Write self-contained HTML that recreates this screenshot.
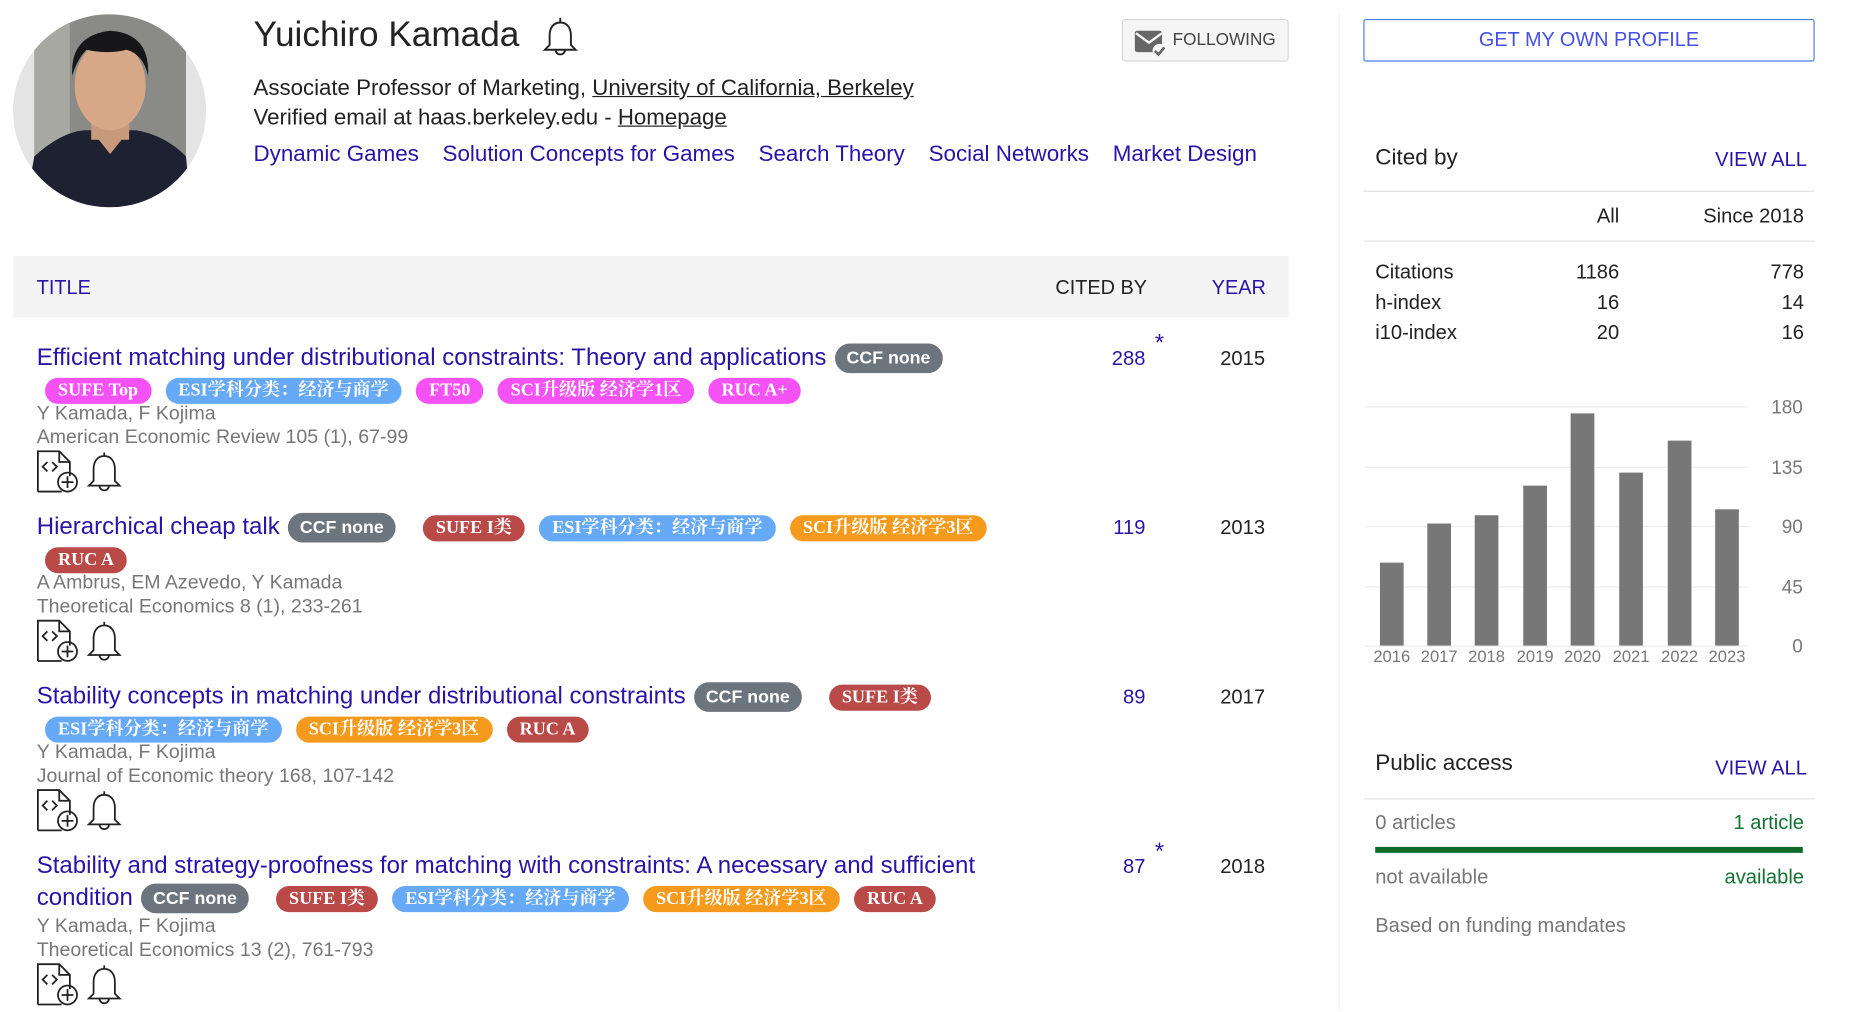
<!DOCTYPE html>
<html><head><meta charset="utf-8">
<style>
html,body{margin:0;padding:0;background:#fff;overflow:hidden;width:1855px;height:1010px}
#w{position:absolute;left:0;top:0;width:1570px;height:852px;transform:scale(1.1845);transform-origin:0 0;font-family:"Liberation Sans","Noto Sans CJK SC",sans-serif;color:#222}
.a{position:absolute;white-space:nowrap}
.lnk{color:#2a13a8}
.g{color:#777}
.tag{display:inline-block;font-family:"Liberation Serif","Noto Serif CJK SC",serif;font-weight:bold;color:#fff;font-size:15.3px;line-height:22px;height:22px;padding:0 11px;border-radius:11px;margin:-5px 5px -5px 7px;vertical-align:1px}
.ccf{font-family:"Liberation Sans",sans-serif;background:#6c757d;height:25px;line-height:25px;border-radius:13px;font-size:15px;padding:0 10px;vertical-align:1px;margin-top:-7px;margin-bottom:-2px}
.mag{background:#f552f5}.blu{background:#66a9f7}.red{background:#b94a48}.org{background:#f59a1c}
.pub{position:absolute;left:31px;width:860px}
.t{font-size:20.3px;line-height:26.5px;color:#2a13a8}
.au{font-size:16.5px;line-height:20px;color:#777;margin-top:-3px}
.ic{height:36px;margin-top:1px}
.num{position:absolute;font-size:17px;color:#2a13a8;text-align:right;width:60px}
.yr{position:absolute;font-size:17px;color:#222;text-align:right;width:60px}
.r{font-size:17px}
</style></head><body><div id="w">
<svg class="a" style="left:11px;top:12px" width="163" height="163" viewBox="0 0 163 163">
<defs><clipPath id="c"><circle cx="81.5" cy="81.5" r="81.5"/></clipPath></defs>
<g clip-path="url(#c)">
<rect width="163" height="163" fill="#e4e4e4"/>
<rect x="18" y="0" width="128" height="163" fill="#8a8a86"/>
<rect x="18" y="0" width="30" height="163" fill="#a7a8a2"/>
<path d="M10 163 L18 120 Q40 100 60 98 L104 98 Q128 102 146 120 L150 163Z" fill="#1e2230"/>
<rect x="66" y="78" width="32" height="28" fill="#c89a7c"/>
<ellipse cx="82" cy="60" rx="30" ry="38" fill="#d7a887"/>
<path d="M50 52 Q48 18 82 14 Q116 16 114 52 Q110 34 96 30 Q80 34 62 30 Q54 38 50 52Z" fill="#17171a"/>
<path d="M66 98 L82 118 L98 98 Z" fill="#c89a7c"/>
</g></svg>
<div class="a" style="left:214px;top:13px;font-size:29.7px;color:#222">Yuichiro Kamada</div>
<svg class="a" style="left:457px;top:13px" width="32" height="36" viewBox="0 0 32 36" fill="none" stroke="#222" stroke-width="1.6"><path d="M16 2v4M16 6c-6 0-9 5-9 11v8l-4 4h26l-4-4v-8c0-6-3-11-9-11zM12 29a4 4 0 0 0 8 0"/></svg>
<div class="a" style="left:947px;top:16px;width:139px;height:34px;border:1px solid #d8d8d8;border-radius:3px;background:#f5f5f5"></div>
<svg class="a" style="left:958px;top:25px" width="28" height="24" viewBox="0 0 28 24"><rect x="0" y="1" width="23" height="18" rx="2" fill="#666"/><path d="M1 3l11 8 11-8" stroke="#f5f5f5" stroke-width="2" fill="none"/><circle cx="21" cy="18" r="6" fill="#f5f5f5"/><path d="M17 18l3 3 5-6" stroke="#666" stroke-width="2.2" fill="none"/></svg>
<div class="a" style="left:990px;top:26px;font-size:14.5px;color:#444">FOLLOWING</div>
<div class="a" style="left:214px;top:63px;font-size:18.8px">Associate Professor of Marketing, <u>University of California, Berkeley</u></div>
<div class="a" style="left:214px;top:88px;font-size:18.8px">Verified email at haas.berkeley.edu - <u>Homepage</u></div>
<div class="a lnk" style="left:214px;top:120px;font-size:18.9px">Dynamic Games<span style="margin-left:20px">Solution Concepts for Games</span><span style="margin-left:20px">Search Theory</span><span style="margin-left:20px">Social Networks</span><span style="margin-left:20px">Market Design</span></div>
<div class="a" style="left:11px;top:216px;width:1077px;height:52px;background:#f4f4f4"></div>
<div class="a lnk" style="left:31px;top:233px;font-size:16.8px">TITLE</div>
<div class="a" style="left:891px;top:233px;font-size:16.8px">CITED BY</div>
<div class="a lnk" style="left:1023px;top:233px;font-size:16.8px">YEAR</div>

<div class="pub" style="top:289px"><div class="t">Efficient matching under distributional constraints: Theory and applications<span class="tag ccf">CCF none</span><span class="tag mag">SUFE Top</span><span class="tag blu">ESI学科分类：经济与商学</span><span class="tag mag">FT50</span><span class="tag mag">SCI升级版 经济学1区</span><span class="tag mag">RUC A+</span></div>
<div class="au">Y Kamada, F Kojima<br>American Economic Review 105 (1), 67-99</div>
<svg class="ic" width="80" height="36" viewBox="0 0 80 36" fill="none" stroke="#222" stroke-width="1.5"><path d="M1 35V1h18l9 9v12M1 35h20"/><path d="M19 1v9h9"/><path d="M9 10l-4 4 4 4M13 10l4 4-4 4"/><circle cx="26" cy="27" r="8"/><path d="M26 22v10M21 27h10"/><path d="M57 2v3M57 5c-6 0-9 5-9 11v10l-4 4h26l-4-4V16c0-6-3-11-9-11zM53 30a4 4 0 0 0 8 0"/></svg></div>
<div class="num" style="left:907px;top:293px">288</div><div class="a lnk" style="left:975px;top:279px;font-size:20px">*</div>
<div class="yr" style="left:1008px;top:293px">2015</div>

<div class="pub" style="top:432px"><div class="t">Hierarchical cheap talk<span class="tag ccf">CCF none</span><span class="tag red" style="margin-left:18px">SUFE I类</span><span class="tag blu">ESI学科分类：经济与商学</span><span class="tag org">SCI升级版 经济学3区</span><span class="tag red">RUC A</span></div>
<div class="au">A Ambrus, EM Azevedo, Y Kamada<br>Theoretical Economics 8 (1), 233-261</div>
<svg class="ic" width="80" height="36" viewBox="0 0 80 36" fill="none" stroke="#222" stroke-width="1.5"><path d="M1 35V1h18l9 9v12M1 35h20"/><path d="M19 1v9h9"/><path d="M9 10l-4 4 4 4M13 10l4 4-4 4"/><circle cx="26" cy="27" r="8"/><path d="M26 22v10M21 27h10"/><path d="M57 2v3M57 5c-6 0-9 5-9 11v10l-4 4h26l-4-4V16c0-6-3-11-9-11zM53 30a4 4 0 0 0 8 0"/></svg></div>
<div class="num" style="left:907px;top:436px">119</div>
<div class="yr" style="left:1008px;top:436px">2013</div>

<div class="pub" style="top:575px"><div class="t">Stability concepts in matching under distributional constraints<span class="tag ccf">CCF none</span><span class="tag red" style="margin-left:18px">SUFE I类</span><span class="tag blu">ESI学科分类：经济与商学</span><span class="tag org">SCI升级版 经济学3区</span><span class="tag red">RUC A</span></div>
<div class="au">Y Kamada, F Kojima<br>Journal of Economic theory 168, 107-142</div>
<svg class="ic" width="80" height="36" viewBox="0 0 80 36" fill="none" stroke="#222" stroke-width="1.5"><path d="M1 35V1h18l9 9v12M1 35h20"/><path d="M19 1v9h9"/><path d="M9 10l-4 4 4 4M13 10l4 4-4 4"/><circle cx="26" cy="27" r="8"/><path d="M26 22v10M21 27h10"/><path d="M57 2v3M57 5c-6 0-9 5-9 11v10l-4 4h26l-4-4V16c0-6-3-11-9-11zM53 30a4 4 0 0 0 8 0"/></svg></div>
<div class="num" style="left:907px;top:579px">89</div>
<div class="yr" style="left:1008px;top:579px">2017</div>

<div class="pub" style="top:718px"><div class="t">Stability and strategy-proofness for matching with constraints: A necessary and sufficient condition<span class="tag ccf">CCF none</span><span class="tag red" style="margin-left:18px">SUFE I类</span><span class="tag blu">ESI学科分类：经济与商学</span><span class="tag org">SCI升级版 经济学3区</span><span class="tag red">RUC A</span></div>
<div class="au" style="margin-top:1px">Y Kamada, F Kojima<br>Theoretical Economics 13 (2), 761-793</div>
<svg class="ic" width="80" height="36" viewBox="0 0 80 36" fill="none" stroke="#222" stroke-width="1.5"><path d="M1 35V1h18l9 9v12M1 35h20"/><path d="M19 1v9h9"/><path d="M9 10l-4 4 4 4M13 10l4 4-4 4"/><circle cx="26" cy="27" r="8"/><path d="M26 22v10M21 27h10"/><path d="M57 2v3M57 5c-6 0-9 5-9 11v10l-4 4h26l-4-4V16c0-6-3-11-9-11zM53 30a4 4 0 0 0 8 0"/></svg></div>
<div class="num" style="left:907px;top:722px">87</div><div class="a lnk" style="left:975px;top:708px;font-size:20px">*</div>
<div class="yr" style="left:1008px;top:722px">2018</div>

<div class="a" style="left:1130px;top:12px;width:1px;height:840px;background:#eee"></div>
<div class="a" style="left:1151px;top:16px;width:379px;height:34px;border:1px solid #4a7ee8;border-radius:2px;text-align:center;line-height:34px;font-size:16.8px;color:#4650e8">GET MY OWN PROFILE</div>
<div class="a" style="left:1161px;top:123px;font-size:19px">Cited by</div>
<div class="a lnk r" style="left:1448px;top:125px">VIEW ALL</div>
<div class="a" style="left:1151px;top:161px;width:381px;height:1px;background:#e2e2e2"></div>
<div class="a r" style="left:1300px;top:173px;width:67px;text-align:right">All</div>
<div class="a r" style="left:1400px;top:173px;width:123px;text-align:right">Since 2018</div>
<div class="a" style="left:1151px;top:203px;width:381px;height:1px;background:#e2e2e2"></div>
<div class="a r" style="left:1161px;top:217px;line-height:25.5px">Citations<br>h-index<br>i10-index</div>
<div class="a r" style="left:1300px;top:217px;width:67px;text-align:right;line-height:25.5px">1186<br>16<br>20</div>
<div class="a r" style="left:1400px;top:217px;width:123px;text-align:right;line-height:25.5px">778<br>14<br>16</div>
<svg class="a" style="left:1150px;top:330px" width="380" height="240" viewBox="1150 330 380 240">
<g stroke="#ececec" stroke-width="1"><line x1="1152" x2="1476" y1="343.5" y2="343.5"/><line x1="1152" x2="1476" y1="394.5" y2="394.5"/><line x1="1152" x2="1476" y1="444.5" y2="444.5"/><line x1="1152" x2="1476" y1="495.5" y2="495.5"/><line x1="1152" x2="1476" y1="545.5" y2="545.5"/></g>
<g fill="#777"><rect x="1165" y="475" width="20" height="70"/><rect x="1205" y="442" width="20" height="103"/><rect x="1245" y="435" width="20" height="110"/><rect x="1286" y="410" width="20" height="135"/><rect x="1326" y="349" width="20" height="196"/><rect x="1367" y="399" width="20" height="146"/><rect x="1408" y="372" width="20" height="173"/><rect x="1448" y="430" width="20" height="115"/></g>
<g font-family="Liberation Sans" font-size="16" fill="#777" text-anchor="end"><text x="1522" y="349">180</text><text x="1522" y="400">135</text><text x="1522" y="450">90</text><text x="1522" y="501">45</text><text x="1522" y="551">0</text></g>
<g font-family="Liberation Sans" font-size="14" fill="#777" text-anchor="middle"><text x="1175" y="559">2016</text><text x="1215" y="559">2017</text><text x="1255" y="559">2018</text><text x="1296" y="559">2019</text><text x="1336" y="559">2020</text><text x="1377" y="559">2021</text><text x="1418" y="559">2022</text><text x="1458" y="559">2023</text></g>
</svg>
<div class="a" style="left:1161px;top:634px;font-size:19px">Public access</div>
<div class="a lnk r" style="left:1448px;top:639px">VIEW ALL</div>
<div class="a" style="left:1151px;top:674px;width:381px;height:1px;background:#e2e2e2"></div>
<div class="a r g" style="left:1161px;top:685px">0 articles</div>
<div class="a r" style="left:1400px;top:685px;width:123px;text-align:right;color:#137333">1 article</div>
<div class="a" style="left:1161px;top:715px;width:361px;height:5px;background:#0d6b27"></div>
<div class="a r g" style="left:1161px;top:731px">not available</div>
<div class="a r" style="left:1400px;top:731px;width:123px;text-align:right;color:#137333">available</div>
<div class="a r g" style="left:1161px;top:772px">Based on funding mandates</div>
</div></body></html>
